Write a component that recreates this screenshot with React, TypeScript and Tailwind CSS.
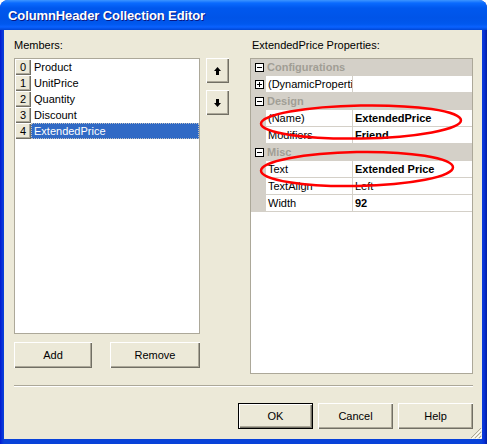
import React from "react";

const bevel =
  "shadow-[inset_1px_1px_0_#ffffff,inset_-1px_-1px_0_#716f64,inset_-2px_-2px_0_#aca899]";

function Btn({ label, w, def }: { label: string; w: string; def?: boolean }) {
  return (
    <div
      className={`${w} h-[26px] flex items-center justify-center bg-[#ece9d8] text-black ${
        def
          ? "border border-black shadow-[inset_1px_1px_0_#ffffff,inset_-1px_-1px_0_#716f64,inset_-2px_-2px_0_#aca899]"
          : bevel
      }`}
    >
      {label}
    </div>
  );
}

function ArrowBtn({ up }: { up?: boolean }) {
  return (
    <div className={`w-[23px] h-[25px] flex items-center justify-center bg-[#ece9d8] ${bevel}`}>
      <svg width="7" height="8" viewBox="0 0 7 8" className={up ? "" : "rotate-180"}>
        <path d="M3.5 0 L7 4 L0 4 Z" fill="#000" />
        <rect x="2" y="4" width="3" height="4" fill="#000" />
      </svg>
    </div>
  );
}

function Box({ plus }: { plus?: boolean }) {
  return (
    <svg width="9" height="9" viewBox="0 0 9 9" className="shrink-0">
      <rect x="0.5" y="0.5" width="8" height="8" fill="#fff" stroke="#000" />
      <rect x="2" y="4" width="5" height="1" fill="#000" />
      {plus && <rect x="4" y="2" width="1" height="5" fill="#000" />}
    </svg>
  );
}

function Category({ name }: { name: string }) {
  return (
    <div className="h-[17px] flex items-center bg-[#d4d0c8] border-b border-[#d4d0c8]">
      <div className="w-[16px] flex justify-center pl-[1px]">
        <Box />
      </div>
      <span className="font-bold text-[#a19e95] pl-[0px]">{name}</span>
    </div>
  );
}

function Prop({
  name,
  value,
  bold,
  expand,
}: {
  name: string;
  value: string;
  bold?: boolean;
  expand?: boolean;
}) {
  return (
    <div className="h-[17px] flex bg-[#d4d0c8]">
      <div className="w-[15px] flex items-center justify-center pl-[1px]">
        {expand && <Box plus />}
      </div>
      <div className="w-[87px] h-[16px] bg-white border-r border-[#d4d0c8] pl-[2px] flex items-center overflow-hidden whitespace-nowrap">
        {name}
      </div>
      <div
        className={`flex-1 h-[16px] bg-white pl-[2px] flex items-center ${bold ? "font-bold" : ""}`}
      >
        {value}
      </div>
    </div>
  );
}

export default function App() {
  const members = ["Product", "UnitPrice", "Quantity", "Discount", "ExtendedPrice"];
  return (
    <div className="w-[487px] h-[444px] bg-white font-['Liberation_Sans',Arial,sans-serif] text-[11px] text-black">
      <div className="relative w-[487px] h-[444px] rounded-t-[8px] overflow-hidden flex flex-col bg-[linear-gradient(to_right,#0019cf,#0831d9_2px,#0842d9_4px,#0842d9_481px,#0831d9_484px,#001ea0)]">
        <div className="h-[30px] shrink-0 flex items-center pl-[8px] bg-[linear-gradient(to_bottom,#3d95ff_0px,#0a6bff_3px,#0058ee_8px,#0054e8_18px,#0058ee_24px,#0a62ff_27px,#0046d5_30px)]">
          <span className="text-white font-bold text-[13px] tracking-[-0.1px] [text-shadow:1px_1px_0_#0a1883] pt-[1px]">
            ColumnHeader Collection Editor
          </span>
        </div>
        <div className="ml-[4px] mr-[5px] h-[409px] bg-[#ece9d8] flex flex-col pt-[9px] pl-[10px]">
          <div className="flex">
            <div className="w-[236px] h-[13px] leading-[13px]">Members:</div>
            <div className="pl-[2px] h-[13px] leading-[13px]">ExtendedPrice Properties:</div>
          </div>
          <div className="flex mt-[6px] h-[316px]">
            <div className="w-[186px] flex flex-col">
              <div className="h-[276px] bg-white border border-[#aca899] flex flex-col">
                {members.map((m, i) => (
                  <div key={m} className="h-[16px] flex">
                    <div className={`w-[16px] h-[16px] bg-[#ece9d8] flex items-center justify-center ${bevel}`}>
                      {i}
                    </div>
                    <div
                      className={`flex-1 h-[16px] pl-[3px] flex items-center ${
                        i === 4
                          ? "bg-[#316ac5] text-white outline-1 outline-dotted outline-[#c0c0c0] -outline-offset-1"
                          : ""
                      }`}
                    >
                      {m}
                    </div>
                  </div>
                ))}
              </div>
              <div className="flex mt-[8px] gap-[18px]">
                <Btn label="Add" w="w-[78px]" />
                <Btn label="Remove" w="w-[90px]" />
              </div>
            </div>
            <div className="ml-[6px] flex flex-col gap-[7px]">
              <ArrowBtn up />
              <ArrowBtn />
            </div>
            <div className="relative ml-[21px] w-[223px] h-[316px] border border-[#aca899] bg-white flex flex-col">
              <Category name="Configurations" />
              <Prop name="(DynamicPropertie" value="" expand />
              <Category name="Design" />
              <Prop name="(Name)" value="ExtendedPrice" bold />
              <Prop name="Modifiers" value="Friend" bold />
              <Category name="Misc" />
              <Prop name="Text" value="Extended Price" bold />
              <Prop name="TextAlign" value="Left" />
              <Prop name="Width" value="92" bold />
              <svg
                className="absolute left-[-251px] top-[-59px] pointer-events-none"
                width="487"
                height="444"
                viewBox="0 0 487 444"
              >
                <ellipse cx="361" cy="122" rx="100" ry="16.5" fill="none" stroke="#ff0000" strokeWidth="2.5" transform="rotate(-1 361 122)" />
                <ellipse cx="357" cy="169" rx="96" ry="17" fill="none" stroke="#ff0000" strokeWidth="2.5" transform="rotate(-1 357 169)" />
              </svg>
            </div>
          </div>
          <div className="mt-[11px] w-[459px] h-[2px] border-t border-[#aca899] border-b border-b-white" />
          <div className="flex mt-[16px] pl-[224px] gap-[5px]">
            <Btn label="OK" w="w-[75px]" def />
            <Btn label="Cancel" w="w-[75px]" />
            <Btn label="Help" w="w-[75px]" />
          </div>
        </div>
        <svg className="absolute left-[470px] top-[427px]" width="12" height="12" viewBox="0 0 12 12">
          <path d="M11 1 L1 11 M11 5 L5 11 M11 9 L9 11" stroke="#aca899" strokeWidth="1" />
          <path d="M12 2 L2 12 M12 6 L6 12 M12 10 L10 12" stroke="#ffffff" strokeWidth="1" />
        </svg>
      </div>
    </div>
  );
}
